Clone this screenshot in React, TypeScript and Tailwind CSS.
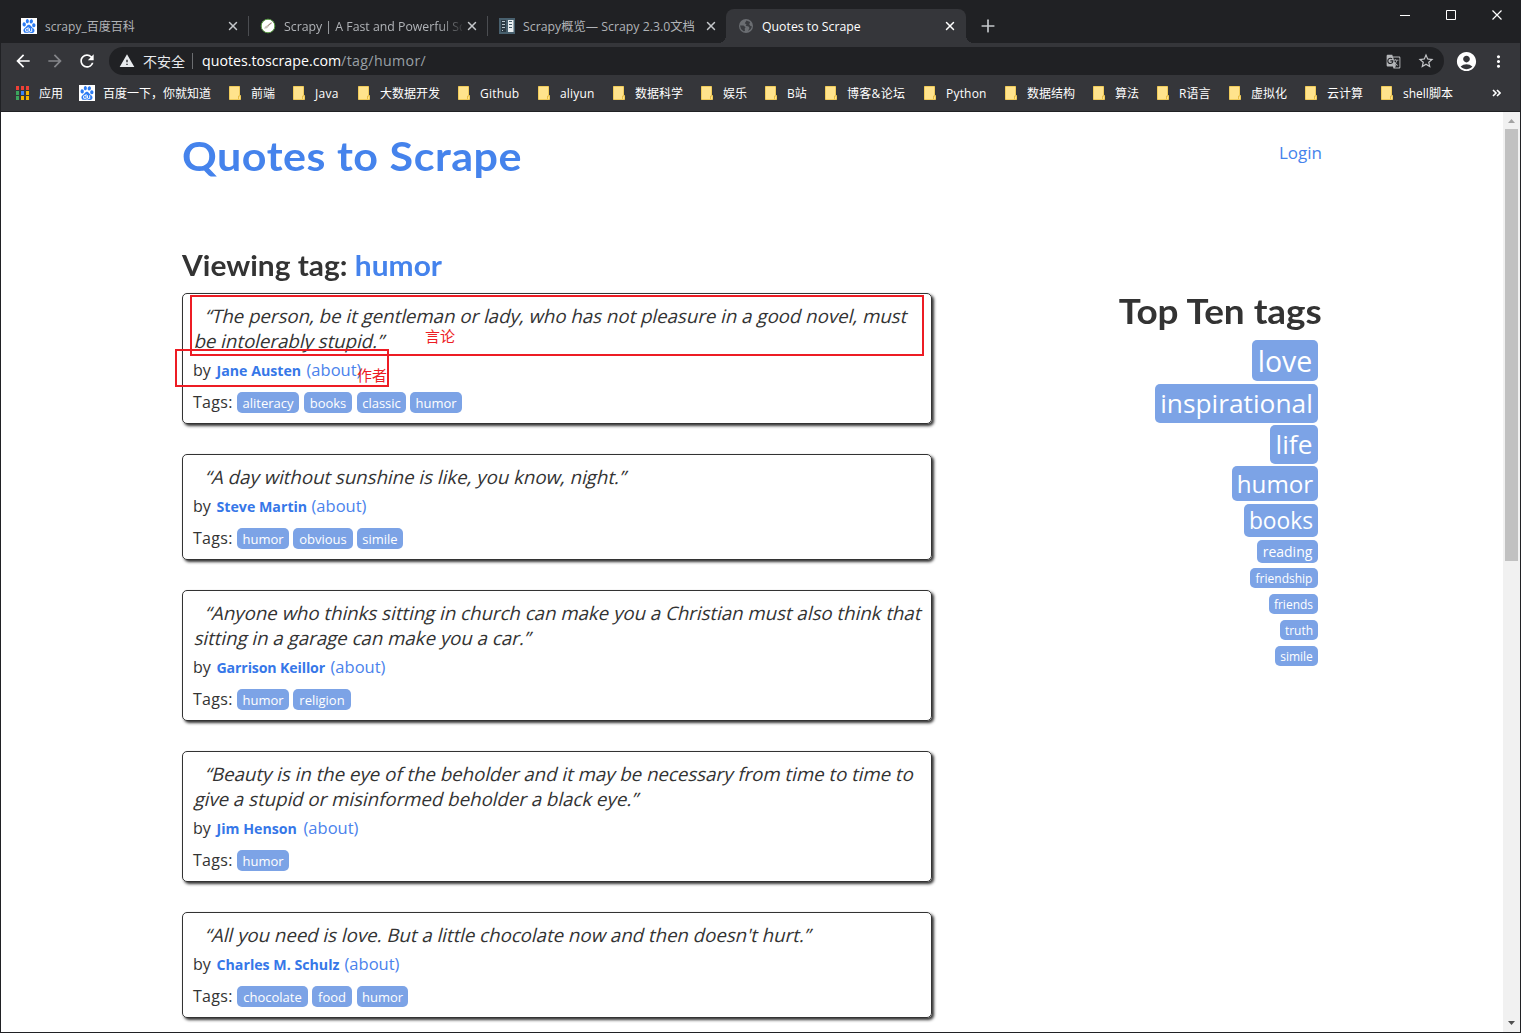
import { Plus, X } from "lucide-react";
import { MdAccountCircle, MdArrowBack, MdArrowForward, MdGTranslate, MdMoreVert, MdRefresh, MdStarBorder, MdWarning } from "react-icons/md";
import { SiBaidu } from "react-icons/si";

const uiFont = "font-['Open_Sans','Noto_Sans_CJK_SC',sans-serif]";

const bookmarks = [
  { label: "前端", width: "w-[64px]" },
  { label: "Java", width: "w-[65px] tracking-[0.3px]" },
  { label: "大数据开发", width: "w-[100px]" },
  { label: "Github", width: "w-[80px] tracking-[0.2px]" },
  { label: "aliyun", width: "w-[75px] tracking-[0.2px]" },
  { label: "数据科学", width: "w-[88px]" },
  { label: "娱乐", width: "w-[64px]" },
  { label: "B站", width: "w-[60px]" },
  { label: "博客&论坛", width: "w-[99px] tracking-[0.3px]" },
  { label: "Python", width: "w-[81px] tracking-[0.2px]" },
  { label: "数据结构", width: "w-[88px]" },
  { label: "算法", width: "w-[64px]" },
  { label: "R语言", width: "w-[72px]" },
  { label: "虚拟化", width: "w-[76px]" },
  { label: "云计算", width: "w-[76px]" },
  { label: "shell脚本", width: "w-[100px]" }
];

const quotes = [
  {
    lines: [
      { text: "“The person, be it gentleman or lady, who has not pleasure in a good novel, must", width: "w-[701px]" },
      { text: "be intolerably stupid.”", width: "w-[193px]" }
    ],
    author: "Jane Austen",
    authorWidth: "w-[90px]",
    tags: [
      { name: "aliteracy", box: "w-[62px] mr-[5px]" },
      { name: "books", box: "w-[48px] mr-[5px]" },
      { name: "classic", box: "w-[49px] mr-[4px]" },
      { name: "humor", box: "w-[52px]" }
    ]
  },
  {
    lines: [{ text: "“A day without sunshine is like, you know, night.”", width: "w-[424px]" }],
    author: "Steve Martin",
    authorWidth: "w-[95px]",
    tags: [
      { name: "humor", box: "w-[52px] mr-[4px]" },
      { name: "obvious", box: "w-[60px] mr-[4px]" },
      { name: "simile", box: "w-[46px]" }
    ]
  },
  {
    lines: [
      { text: "“Anyone who thinks sitting in church can make you a Christian must also think that", width: "w-[715px]" },
      { text: "sitting in a garage can make you a car.”", width: "w-[343px]" }
    ],
    author: "Garrison Keillor",
    authorWidth: "w-[114px] tracking-[-0.15px]",
    tags: [
      { name: "humor", box: "w-[52px] mr-[4px]" },
      { name: "religion", box: "w-[58px]" }
    ]
  },
  {
    lines: [
      { text: "“Beauty is in the eye of the beholder and it may be necessary from time to time to", width: "w-[707px]" },
      { text: "give a stupid or misinformed beholder a black eye.”", width: "w-[448px]" }
    ],
    author: "Jim Henson",
    authorWidth: "w-[87px]",
    tags: [{ name: "humor", box: "w-[52px]" }]
  },
  {
    lines: [{ text: "“All you need is love. But a little chocolate now and then doesn't hurt.”", width: "w-[610px]" }],
    author: "Charles M. Schulz",
    authorWidth: "w-[128px]",
    tags: [
      { name: "chocolate", box: "w-[71px] mr-[4px]" },
      { name: "food", box: "w-[40px] mr-[5px]" },
      { name: "humor", box: "w-[51px]" }
    ]
  }
];

const topTags = [
  { name: "love", box: "h-[41px] w-[66px] text-[28.5px] mb-[3px] pt-[2px]" },
  { name: "inspirational", box: "h-[39px] w-[163px] text-[26.3px] mb-[2px]" },
  { name: "life", box: "h-[39px] w-[48px] text-[26.3px] mb-[2px]" },
  { name: "humor", box: "h-[35px] w-[86px] text-[24.2px] mb-[3px] pt-px" },
  { name: "books", box: "h-[33px] w-[74px] text-[22.8px] mb-[3px] pt-px" },
  { name: "reading", box: "h-[23px] w-[61px] text-[14px] mb-[5px] pt-px" },
  { name: "friendship", box: "h-[20px] w-[68px] text-[12px] mb-[6px] pt-[2px]" },
  { name: "friends", box: "h-[20px] w-[49px] text-[12px] mb-[6px] pt-[2px]" },
  { name: "truth", box: "h-[20px] w-[38px] text-[12px] mb-[6px] pt-[2px]" },
  { name: "simile", box: "h-[20px] w-[43px] text-[12px] pt-[2px]" }
];

function BaiduIcon() {
  return (
    <span className="grid size-4 shrink-0 place-items-center bg-white text-[#2b7bf3]">
      <SiBaidu size={14} />
    </span>
  );
}

function ScrapyIcon() {
  return (
    <svg viewBox="0 0 16 16" className="size-4 shrink-0">
      <circle cx="8" cy="8" r="6.8" fill="#fff" stroke="#5a9c45" strokeWidth="1" />
      <path d="M4 10.8 5.200 8.600 7.800 7l1 1.200-1.800 2z" fill="#c9c2ba" />
      <path d="m8 7.700 3.600-3" stroke="#9c8577" strokeWidth="1.1" />
    </svg>
  );
}

function DocsIcon() {
  return (
    <svg viewBox="0 0 16 16" className="size-4 shrink-0">
      <path d="M0 0h16v16H0z" fill="#48606e" />
      <path d="M2 2h5v12H2z" fill="#2b3942" />
      <path d="M9 2h5.500v12H9z" fill="#e9eef0" />
      <path d="M3 3.500h3M3 6.500h3M3 9.500h3M3 12.500h1" stroke="#b8c5cc" />
      <path d="M10 3.500h3M10 6.500h3M10 9.500h3" stroke="#48606e" />
    </svg>
  );
}

function GlobeIcon() {
  return (
    <svg viewBox="0 0 16 16" className="size-4 shrink-0">
      <circle cx="8" cy="8" r="7" fill="#6b6e72" />
      <path d="M8.500 2.500 6.800 5.200l1.700 1.300-.8 1.200 2.800.8 1 1.600-1.500 3 2.600-1.800L14 8.500 12.500 8l-1.300-1.700 1-2.300z" fill="#3a3c40" />
      <path d="M2 7.500h3.500l2 1.800-.8 1.400.3 2.300-1.500.3L3 11z" fill="#3a3c40" />
    </svg>
  );
}

function FolderIcon() {
  return (
    <svg viewBox="0 0 12 14" className="h-3.5 w-3 shrink-0">
      <path d="M.5.5h10v9h1v4H.5z" fill="#ffe38c" stroke="#f0cb5a" />
      <path d="M9.500 13v-3h1.500" fill="none" stroke="#e8bd45" />
    </svg>
  );
}

function AppsIcon() {
  const colors = ["#ee4036", "#ee4036", "#ee4036", "#3ba55d", "#3b82f6", "#f4b400", "#3ba55d", "#f4b400", "#f4b400"];
  return (
    <span className="grid shrink-0 grid-cols-3 gap-x-0.5 gap-y-px">
      {colors.map((color, i) => (
        <span key={i} className="h-1 w-[3px]" style={{ backgroundColor: color }} />
      ))}
    </span>
  );
}

function WindowButtons() {
  return (
    <svg viewBox="0 0 102 10" fill="none" stroke="#fff" className="mb-[23px] ml-auto mr-[18px] h-2.5 w-[102px]">
      <path d="M0 5.500h10" />
      <path d="M46.500.5h9v9h-9z" />
      <path d="m92.500.5 9 9M101.500.5l-9 9" strokeWidth="1.2" />
    </svg>
  );
}

function TabStrip() {
  return (
    <div className="flex h-[43px] items-end bg-[#202124] text-[12.3px] text-[#b0b3b7]">
      <div className="flex h-[34px] w-[247px] items-center pl-5 pr-2">
        <BaiduIcon />
        <span className="ml-2 flex-1 pt-0.5 text-[12px]">scrapy_百度百科</span>
        <X size={14} strokeWidth={2.5} className="text-[#c4c7ca]" />
      </div>
      <div className="mb-[7px] h-5 w-px bg-[#4b4d51]" />
      <div className="flex h-[34px] w-[238px] items-center pl-[11px] pr-2">
        <ScrapyIcon />
        <span className="ml-2 w-[178px] whitespace-nowrap pt-0.5 [mask-image:linear-gradient(to_right,#000_155px,transparent_182px)]">
          Scrapy | A Fast and Powerful Sc
        </span>
        <X size={14} strokeWidth={2.5} className="ml-[3px] shrink-0 text-[#c4c7ca]" />
      </div>
      <div className="mb-[7px] h-5 w-px bg-[#4b4d51]" />
      <div className="flex h-[34px] w-[238px] items-center pl-[11px] pr-2">
        <DocsIcon />
        <span className="ml-2 flex-1 whitespace-nowrap pt-0.5 text-[12.3px]">Scrapy概览— Scrapy 2.3.0文档</span>
        <X size={14} strokeWidth={2.5} className="shrink-0 text-[#c4c7ca]" />
      </div>
      <div className="relative flex h-[34px] w-[240px] items-center rounded-t-lg bg-[#35363a] pl-3 pr-[9px] text-white">
        <span className="absolute -left-2 bottom-0 size-2 bg-[radial-gradient(circle_at_0_0,transparent_8px,#35363a_8px)]" />
        <span className="absolute -right-2 bottom-0 size-2 bg-[radial-gradient(circle_at_100%_0,transparent_8px,#35363a_8px)]" />
        <GlobeIcon />
        <span className="ml-2 flex-1 pt-0.5">Quotes to Scrape</span>
        <X size={14} strokeWidth={2.5} />
      </div>
      <Plus size={20} className="mb-[7px] ml-3 text-[#c4c7ca]" />
      <WindowButtons />
    </div>
  );
}

function Toolbar() {
  return (
    <div className="flex h-9 items-center bg-[#35363a] pl-3 text-white">
      <MdArrowBack size={20} />
      <MdArrowForward size={20} className="ml-3 text-[#85868a]" />
      <MdRefresh size={20} className="ml-3" />
      <div className="ml-3 flex h-7 w-[1335px] items-center rounded-full bg-[#202124] pl-2.5 pr-[9px]">
        <MdWarning size={16} className="text-[#e8eaed]" />
        <span className="ml-2 text-[14px] text-[#e8eaed]">不安全</span>
        <span className="ml-[7px] h-4 w-px bg-[#6b6d70]" />
        <span className="ml-[9px] text-[14.2px]">
          quotes.toscrape.com<span className="tracking-[0.35px] text-[#9aa0a6]">/tag/humor/</span>
        </span>
        <MdGTranslate size={15} className="ml-auto text-[#b5b7ba]" />
        <MdStarBorder size={18} className="ml-4 text-[#c4c6c9]" />
      </div>
      <MdAccountCircle size={23} className="ml-[11px]" />
      <MdMoreVert size={19} className="ml-[11px]" />
    </div>
  );
}

function BookmarkBar() {
  return (
    <div className="flex h-8 items-center overflow-hidden whitespace-nowrap bg-[#35363a] pb-1 pl-[15px] text-[12px] text-white">
      <div className="flex w-[63px] items-center gap-2.5">
        <AppsIcon />
        <span className="pt-0.5">应用</span>
      </div>
      <div className="flex w-[150px] items-center gap-2">
        <BaiduIcon />
        <span className="pt-0.5">百度一下，你就知道</span>
      </div>
      {bookmarks.map((item) => (
        <div key={item.label} className={`flex shrink-0 items-center gap-2.5 ${item.width}`}>
          <FolderIcon />
          <span className="pt-0.5">{item.label}</span>
        </div>
      ))}
      <svg viewBox="0 0 9 8" fill="none" stroke="#fff" strokeWidth="1.6" className="ml-[11px] h-2 w-[9px]">
        <path d="m1 1 3 3-3 3M5 1l3 3-3 3" />
      </svg>
    </div>
  );
}

function QuoteCard({ quote, annotated }: { quote: (typeof quotes)[number]; annotated: boolean }) {
  return (
    <div className="relative mb-[30px] w-[750px] rounded-[5px] border border-[#333] px-2.5 pb-[5px] pt-2.5 shadow-[2px_2px_3px_#333]">
      {quote.lines.map((line, i) => (
        <p key={line.text} className={`h-[25px] whitespace-nowrap text-[18.65px] leading-[23px] -skew-x-[14deg] ${line.width} ${i === 0 ? "ml-[13px]" : "ml-[1.5px]"}`}>
          {line.text}
        </p>
      ))}
      <div className="flex h-8 items-center whitespace-nowrap text-[16px]">
        <span className="w-[23.5px]">by</span>
        <b className={`pt-0.5 text-[14.2px] text-[#3677e8] ${quote.authorWidth}`}>{quote.author}</b>
        <a className="text-[16.5px] text-[#4a82ec]">(about)</a>
      </div>
      <div className="flex h-8 items-center text-[16px]">
        <span className="w-[44px] tracking-[0.3px]">Tags:</span>
        {quote.tags.map((tag) => (
          <a key={tag.name} className={`h-[21px] rounded-[5px] bg-[#7ca3e6] text-center text-[13px] leading-[22px] text-white ${tag.box}`}>
            {tag.name}
          </a>
        ))}
      </div>
      {annotated && (
        <div className="text-[15px] leading-none text-[#ed1c24]">
          <div className="absolute left-[7px] top-[1px] h-[61px] w-[734px] border-2 border-[#ed1c24]" />
          <div className="absolute left-[-8px] top-[55px] h-[38px] w-[214px] border-2 border-[#ed1c24]" />
          <span className="absolute left-[242px] top-[35px]">言论</span>
          <span className="absolute left-[174px] top-[74px]">作者</span>
        </div>
      )}
    </div>
  );
}

export default function App() {
  return (
    <div className={`flex h-[1033px] w-[1521px] flex-col overflow-hidden border border-t-0 border-[#202124] bg-white text-[#333] ${uiFont}`}>
      <TabStrip />
      <Toolbar />
      <BookmarkBar />
      <div className="h-px shrink-0 bg-[#202124]" />
      <div className="flex min-h-0 flex-1">
        <main className="min-w-0 flex-1 overflow-hidden pl-[181px]">
          <div className="flex h-[138px] w-[1140px] justify-between">
            <h1 className="mt-[20px] origin-left scale-x-[1.05] whitespace-nowrap font-['Lato',sans-serif] text-[41px] font-bold leading-[48px] tracking-[0.5px] text-[#4583ec]">
              Quotes to Scrape
            </h1>
            <a className="mt-[28px] text-[17px] text-[#4583ec]">Login</a>
          </div>
          <h3 className="h-[43px] w-fit origin-left scale-x-[1.05] font-['Lato',sans-serif] text-[28.5px] font-bold leading-[31px]">
            Viewing tag: <a className="text-[#4583ec]">humor</a>
          </h3>
          <div className="flex w-[1140px] justify-between">
            <div>
              {quotes.map((quote, i) => (
                <QuoteCard key={quote.author} quote={quote} annotated={i === 0} />
              ))}
            </div>
            <div className="flex flex-col items-end">
              <h2 className="mb-[11px] origin-right scale-x-[1.07] whitespace-nowrap font-['Lato',sans-serif] text-[34.5px] font-bold leading-[36px]">Top Ten tags</h2>
              {topTags.map((tag) => (
                <a key={tag.name} className={`mr-1 flex items-center justify-center rounded-[5px] bg-[#7ca3e6] leading-none text-white ${tag.box}`}>
                  {tag.name}
                </a>
              ))}
            </div>
          </div>
        </main>
        <div className="flex w-[17px] flex-col items-center justify-between bg-[#f1f1f1]">
          <div className="flex flex-col items-center">
            <svg viewBox="0 0 17 17" className="size-[17px]">
              <path d="m5 11 3.500-4 3.500 4z" fill="#a3a3a3" />
            </svg>
            <div className="h-[432px] w-[13px] bg-[#c1c1c1]" />
          </div>
          <svg viewBox="0 0 17 17" className="size-[17px]">
            <path d="m5 6 3.500 4 3.500-4z" fill="#505050" />
          </svg>
        </div>
      </div>
    </div>
  );
}
